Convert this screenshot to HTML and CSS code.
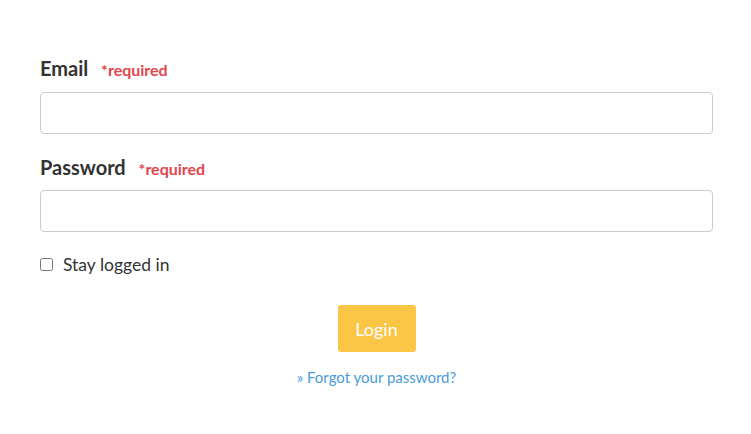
FILE: index.html
```html
<!DOCTYPE html>
<html>
<head>
<meta charset="utf-8">
<link rel="stylesheet" href="styles.css">
</head>
<body>
<form class="login">
  <div class="field">
    <label class="label">Email <span class="req">*required</span></label>
    <input class="input" type="text">
  </div>
  <div class="field">
    <label class="label">Password <span class="req">*required</span></label>
    <input class="input" type="password">
  </div>
  <label class="check"><input type="checkbox" class="box"> Stay logged in</label>
  <div class="actions">
    <button type="button" class="btn">Login</button>
    <a class="forgot" href="#">» Forgot your password?</a>
  </div>
</form>
</body>
</html>
```
FILE: styles.css
```css
html, body { margin: 0; background: #fff; }
body { font-family: Lato, "Noto Sans", sans-serif; color: #333; }
.login { padding: 55px 38px 0 40px; display: flex; flex-direction: column; }
.field { display: flex; flex-direction: column; margin-bottom: 19px; }
.field + .field .label { margin-top: 1px; margin-bottom: 8px; }
.label { font-size: 20px; font-weight: 700; color: #333; line-height: 26px; margin-bottom: 9px; }
.req { font-size: 16px; color: #e2454b; margin-left: 8px; }
.input { height: 42px; box-sizing: border-box; border: 1px solid #ccc; border-radius: 4px; margin: 0; }
.check { display: flex; align-items: center; font-size: 17.5px; color: #333; margin-top: 3px; }
.box { width: 13px; height: 13px; margin: 0 10px 0 0; }
.actions { display: flex; flex-direction: column; align-items: center; margin-top: 30px; }
.btn { width: 78px; height: 47px; background: #fbc546; border: none; border-radius: 3px; color: #fff; font-family: inherit; font-size: 18px; }
.forgot { margin-top: 16px; font-size: 15px; color: #4a9bd8; text-decoration: none; }
```
